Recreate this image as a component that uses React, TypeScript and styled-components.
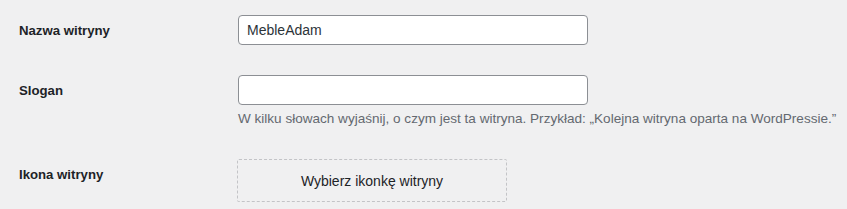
import React from "react";
import styled, { createGlobalStyle } from "styled-components";

const Global = createGlobalStyle`
  html, body { margin: 0; padding: 0; background: #f0f0f1; }
  body {
    font-family: "Segoe UI", "Liberation Sans", Arial, sans-serif;
    font-size: 14px;
    color: #3c434a;
  }
`;

const Form = styled.div`
  padding-left: 19px;
  width: 828px;
`;

const Row = styled.div`
  display: grid;
  grid-template-columns: 219px 1fr;
`;

const Label = styled.label`
  padding: 22px 10px 20px 0;
  font-weight: 700;
  font-size: 13.2px;
  line-height: 1.3;
  color: #1d2327;
  display: block;
`;

const Field = styled.div`
  padding: 15px 0 15px 0;
  display: flex;
  flex-direction: column;
  align-items: flex-start;
`;

const Input = styled.input`
  box-sizing: border-box;
  width: 350px;
  height: 30px;
  margin: 0;
  padding: 0 8px;
  border: 1px solid #8c8f94;
  border-radius: 4px;
  background: #fff;
  font-family: inherit;
  font-size: 14px;
  color: #2c3338;
  outline: none;
`;

const Description = styled.p`
  margin: 4px 0 0;
  font-size: 13.55px;
  line-height: 1.5;
  color: #646970;
`;

const IconButton = styled.button`
  box-sizing: border-box;
  width: 270px;
  height: 43px;
  margin: 0 0 0 -1px;
  background: transparent;
  border: 1px dashed #c3c4c7;
  border-radius: 2px;
  font-family: inherit;
  font-size: 14px;
  color: #1d2327;
  cursor: pointer;
`;

export default function App() {
  return (
    <>
      <Global />
      <Form>
        <Row>
          <Label htmlFor="blogname">Nazwa witryny</Label>
          <Field>
            <Input id="blogname" defaultValue="MebleAdam" />
          </Field>
        </Row>
        <Row>
          <Label htmlFor="blogdescription">Slogan</Label>
          <Field>
            <Input id="blogdescription" defaultValue="" />
            <Description>
              W kilku słowach wyjaśnij, o czym jest ta witryna. Przykład: „Kolejna witryna oparta na WordPressie.”
            </Description>
          </Field>
        </Row>
        <Row>
          <Label>Ikona witryny</Label>
          <Field>
            <IconButton type="button">Wybierz ikonkę witryny</IconButton>
          </Field>
        </Row>
      </Form>
    </>
  );
}
